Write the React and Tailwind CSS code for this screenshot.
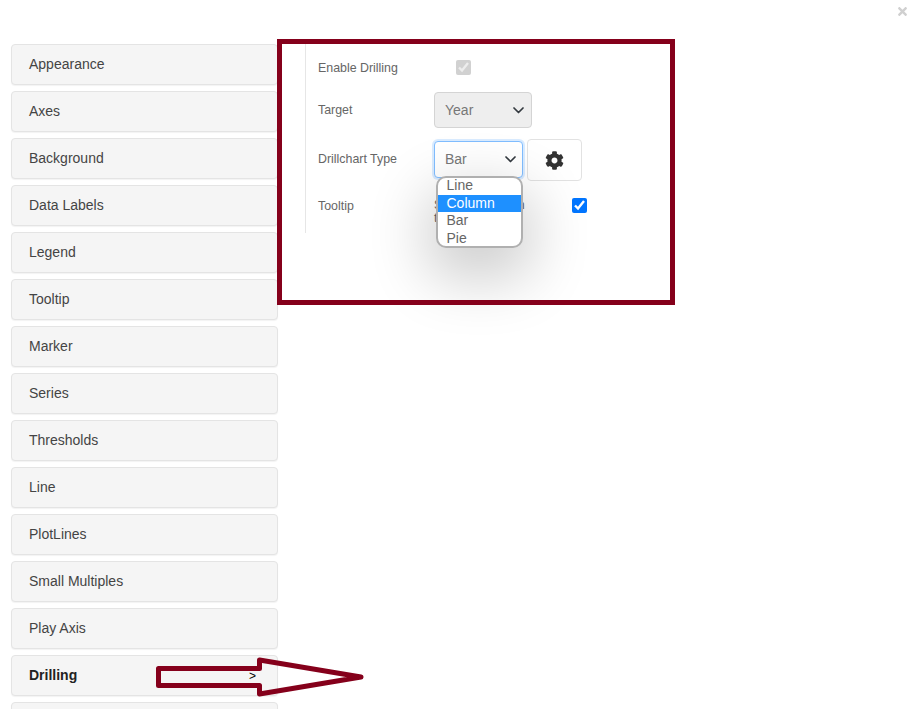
import React from "react";
import { FaCog, FaTimes } from "react-icons/fa";

const items = ["Appearance","Axes","Background","Data Labels","Legend","Tooltip","Marker","Series","Thresholds","Line","PlotLines","Small Multiples","Play Axis","Drilling",""];

function Chevron() {
  return (
    <svg width="11" height="7" viewBox="0 0 11 7" fill="none" stroke="#343a40" strokeWidth="1.7" strokeLinecap="round" strokeLinejoin="round">
      <path d="M1 1l4.5 4.5L10 1" />
    </svg>
  );
}

export default function App() {
  return (
    <div className="relative w-[913px] h-[714px] bg-white overflow-hidden font-['Liberation_Sans',Arial,sans-serif]">
      <FaTimes className="absolute left-[896px] top-[5px] text-[13px] text-[#d0d0d0]" />

      <div className="flex h-[709px] pl-[11px] pt-[44px] overflow-hidden">
        <nav className="w-[267px] shrink-0 flex flex-col gap-[6px]">
          {items.map((t) => (
            <div
              key={t || "more"}
              className={`h-[41px] shrink-0 flex items-center justify-between pl-[17px] pr-[21px] rounded-[4px] border border-[#e4e4e4] bg-[#f5f5f5] shadow-[0_1px_1px_rgba(0,0,0,0.05)] text-[14px] ${t === "Drilling" ? "font-bold text-[#222]" : "text-[#444]"}`}
            >
              <span>{t}</span>
              {t === "Drilling" && <span className="font-normal text-[12px] text-black">&gt;</span>}
            </div>
          ))}
        </nav>

        <section className="ml-[27px] w-[340px] h-[189px] border-l border-[#e6e6e6] pl-[12px] text-[12.4px] text-[#666] flex flex-col">
          <div className="h-[48px] shrink-0 flex items-center">
            <span className="w-[116px]">Enable Drilling</span>
            <input type="checkbox" checked disabled readOnly className="ml-[22px] mb-[2px] w-[15px] h-[15px]" />
          </div>
          <div className="h-[36px] shrink-0 flex items-center">
            <span className="w-[116px] pt-[1px]">Target</span>
            <div className="w-[98px] h-[36px] flex items-center justify-between pl-[10px] pr-[7px] rounded-[4px] border border-[#d4d4d4] bg-[#eeeeee] text-[14px] text-[#777]">
              <span className="pt-[1px]">Year</span>
              <Chevron />
            </div>
          </div>
          <div className="mt-[11px] h-[42px] shrink-0 flex items-center">
            <span className="w-[116px] mb-[2px]">Drillchart Type</span>
            <div className="relative mb-[2px] w-[89px] h-[37px] flex items-center justify-between pl-[10px] pr-[6px] rounded-[4px] border border-[#80bdff] bg-white shadow-[0_0_0_2px_rgba(0,123,255,0.15)] text-[14px] text-[#777]">
              <span>Bar</span>
              <Chevron />
            </div>
            <button className="ml-[4px] w-[55px] h-[42px] flex items-center justify-center rounded-[4px] border border-[#e2e2e2] bg-white text-[#333]">
              <FaCog className="text-[19px]" />
            </button>
          </div>
          <div className="relative mt-[16px] shrink-0 flex items-start">
            <span className="w-[116px] leading-[18px]">Tooltip</span>
            <span className="w-[94px] whitespace-nowrap tracking-[0.4px] leading-[13px] pt-[2px]">Show Drilldown<br />tooltip</span>
            <input type="checkbox" checked readOnly className="ml-[44px] mt-[1px] w-[15px] h-[15px]" />
            <ul className="absolute left-[117.5px] top-[-21px] w-[87.5px] h-[72px] overflow-hidden rounded-[10px] border-2 border-[#b0b0b0] bg-white text-[14px] leading-[17.5px] text-[#666] shadow-[0_22px_60px_8px_rgba(0,0,0,0.2)]">
              <li className="pl-[9px] -mt-[1px]">Line</li>
              <li className="pl-[9px] bg-[#1e90ff] text-white">Column</li>
              <li className="pl-[9px]">Bar</li>
              <li className="pl-[9px]">Pie</li>
            </ul>
          </div>
        </section>
      </div>

      {/* annotation overlays */}
      <div className="absolute left-[277px] top-[39px] w-[398px] h-[266px] border-[5px] border-[#85001b] pointer-events-none" />
      <svg className="absolute left-[150px] top-[650px] pointer-events-none" width="220" height="52" viewBox="150 650 220 52" fill="none">
        <path d="M158.5 668.5H259.5V660L361 677L259.5 694V685.5H158.5Z" stroke="#85001b" strokeWidth="5" strokeLinejoin="round" />
      </svg>
    </div>
  );
}
